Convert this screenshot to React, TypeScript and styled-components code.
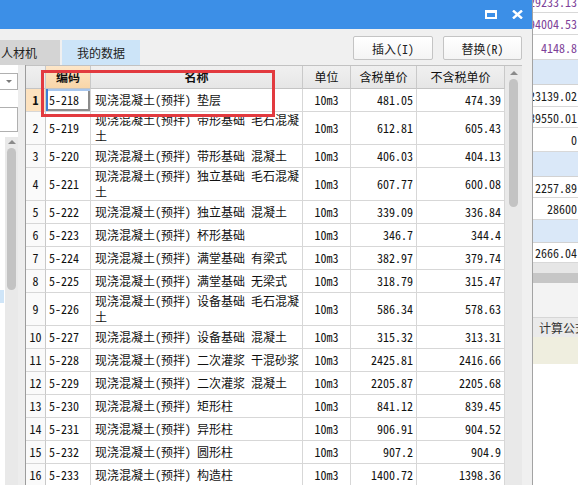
import React from 'react'
import styled, { createGlobalStyle } from 'styled-components'

const FONT = `"Noto Sans Mono CJK SC", "DejaVu Sans Mono", "Noto Sans CJK SC", monospace`

const GlobalStyle = createGlobalStyle`
  html, body {
    margin: 0;
    padding: 0;
    background: #fff;
  }
  body {
    font-family: ${FONT};
    font-size: 12px;
    color: #1a1a1a;
  }
`

const COLS = '20px 45px 212px 48px 66px 88px'

var rows = [
  { code: '5-218', name: ['现浇混凝土(预拌) 垫层'], tax: '481.05', noTax: '474.39' },
  { code: '5-219', name: ['现浇混凝土(预拌) 带形基础 毛石混凝', '土'], tax: '612.81', noTax: '605.43' },
  { code: '5-220', name: ['现浇混凝土(预拌) 带形基础 混凝土'], tax: '406.03', noTax: '404.13' },
  { code: '5-221', name: ['现浇混凝土(预拌) 独立基础 毛石混凝', '土'], tax: '607.77', noTax: '600.08' },
  { code: '5-222', name: ['现浇混凝土(预拌) 独立基础 混凝土'], tax: '339.09', noTax: '336.84' },
  { code: '5-223', name: ['现浇混凝土(预拌) 杯形基础'], tax: '346.7', noTax: '344.4' },
  { code: '5-224', name: ['现浇混凝土(预拌) 满堂基础 有梁式'], tax: '382.97', noTax: '379.74' },
  { code: '5-225', name: ['现浇混凝土(预拌) 满堂基础 无梁式'], tax: '318.79', noTax: '315.47' },
  { code: '5-226', name: ['现浇混凝土(预拌) 设备基础 毛石混凝', '土'], tax: '586.34', noTax: '578.63' },
  { code: '5-227', name: ['现浇混凝土(预拌) 设备基础 混凝土'], tax: '315.32', noTax: '313.31' },
  { code: '5-228', name: ['现浇混凝土(预拌) 二次灌浆 干混砂浆'], tax: '2425.81', noTax: '2416.66' },
  { code: '5-229', name: ['现浇混凝土(预拌) 二次灌浆 混凝土'], tax: '2205.87', noTax: '2205.68' },
  { code: '5-230', name: ['现浇混凝土(预拌) 矩形柱'], tax: '841.12', noTax: '839.45' },
  { code: '5-231', name: ['现浇混凝土(预拌) 异形柱'], tax: '906.91', noTax: '904.52' },
  { code: '5-232', name: ['现浇混凝土(预拌) 圆形柱'], tax: '907.2', noTax: '904.9' },
  { code: '5-233', name: ['现浇混凝土(预拌) 构造柱'], tax: '1400.72', noTax: '1398.36' },
]

// the window behind the dialog, only its right edge shows
var sideRows = [
  { kind: 'row', h: 23, text: '29233.13', purple: true },
  { kind: 'row', h: 22, text: '94004.53', purple: true },
  { kind: 'row', h: 25, text: '4148.8', purple: true },
  { kind: 'band', h: 25 },
  { kind: 'row', h: 22, text: '23139.02' },
  { kind: 'row', h: 21, text: '89550.01' },
  { kind: 'row', h: 24, text: '0' },
  { kind: 'band', h: 25 },
  { kind: 'row', h: 21, text: '2257.89' },
  { kind: 'row', h: 22, text: '28600' },
  { kind: 'band', h: 23 },
  { kind: 'row', h: 20, text: '2666.04' },
]

const Page = styled.div`
  position: relative;
  display: flex;
  width: 578px;
  height: 485px;
  overflow: hidden;
  background: #fff;
`

const Dialog = styled.div`
  flex: none;
  width: 533px;
  box-sizing: border-box;
  display: flex;
  flex-direction: column;
  background: #f0f0f0;
  border-right: 1px solid #a3a3a3;
`

const TitleBar = styled.div`
  flex: none;
  height: 29px;
  background: #3c8fe7;
  display: flex;
  align-items: center;
  justify-content: flex-end;
  gap: 15px;
  padding-right: 9px;
`

const Toolbar = styled.div`
  flex: none;
  height: 36px;
  display: flex;
  padding-right: 10px;
`

const Tabs = styled.div`
  display: flex;
  gap: 2px;
  align-self: flex-end;
  margin-left: -22px;
`

const Tab = styled.div<{ $active?: boolean }>`
  height: 25px;
  display: flex;
  align-items: center;
  padding: 0 ${p => (p.$active ? '15px' : '23px')};
  background: ${p => (p.$active ? '#cce4f8' : '#d4d4d4')};
  color: #222;
  font-size: 12px;
`

const Spacer = styled.div`
  flex: 1;
`

const Buttons = styled.div`
  display: flex;
  gap: 10px;
  margin-top: 7px;
`

const Button = styled.button<{ $w: number }>`
  width: ${p => p.$w}px;
  height: 24px;
  padding: 0;
  border: 1px solid #c4c4c4;
  border-radius: 2px;
  background: linear-gradient(#ffffff, #f4f4f4);
  font-family: ${FONT};
  font-size: 12px;
  color: #222;
`

const Content = styled.div`
  flex: 1;
  min-height: 0;
  display: flex;
  padding-right: 10px;
`

const LeftPanel = styled.div`
  flex: none;
  width: 18px;
  background: #fff;
  display: flex;
  flex-direction: column;
`

const Dropdown = styled.div`
  margin-top: 8px;
  height: 17px;
  box-sizing: border-box;
  border: 1px solid #b0b0b0;
  border-left: none;
  display: flex;
  align-items: center;
  justify-content: flex-end;
  padding-right: 5px;
`

const DownCaret = styled.div`
  width: 0;
  height: 0;
  border-left: 3px solid transparent;
  border-right: 3px solid transparent;
  border-top: 3px solid #7a7a7a;
`

const InputBox = styled.div`
  margin-top: 17px;
  height: 25px;
  box-sizing: border-box;
  border: 1px solid #b0b0b0;
  border-left: none;
`

const ScrollZone = styled.div`
  flex: 1;
  margin-top: 5px;
  display: flex;
`

const ListStrip = styled.div`
  width: 5px;
`

const Picked = styled.div`
  margin-top: 153px;
  width: 4px;
  height: 13px;
  background: #cfe5f8;
`

const Track = styled.div<{ $thumbTop: number; $thumb: number }>`
  flex: 1;
  background: #e9e9e9;
  display: flex;
  flex-direction: column;
  align-items: center;
  padding-top: 3px;

  &::after {
    content: '';
    margin-top: ${p => p.$thumbTop}px;
    width: 9px;
    height: ${p => p.$thumb}px;
    border-radius: 5px;
    background: #c3c3c3;
  }
`

const UpCaret = styled.div`
  width: 0;
  height: 0;
  border-left: 4px solid transparent;
  border-right: 4px solid transparent;
  border-bottom: 4px solid #8a8a8a;
`

const Splitter = styled.div`
  flex: none;
  width: 8px;
  box-sizing: border-box;
  background: #ededed;
  border-right: 1px solid #9c9c9c;
`

const GridArea = styled.div`
  flex: 1;
  display: flex;
  background: #fff;
  border-top: 1px solid #c2c2c2;
`

const Table = styled.div`
  flex: none;
  width: 479px;
`

const GridRow = styled.div<{ $tall?: boolean; $head?: boolean }>`
  display: grid;
  grid-template-columns: ${COLS};
  height: ${p => (p.$head ? 23 : p.$tall ? 33 : 23)}px;
`

const Cell = styled.div<{ $align?: 'left' | 'center' | 'right'; $top?: boolean }>`
  box-sizing: border-box;
  display: flex;
  flex-direction: column;
  justify-content: ${p => (p.$top ? 'flex-start' : 'center')};
  align-items: ${p => (p.$align === 'right' ? 'flex-end' : p.$align === 'center' ? 'center' : 'flex-start')};
  padding: 0 ${p => (p.$align === 'right' ? '3px' : '0')} 0 ${p => (p.$align === 'left' ? '3px' : '0')};
  border-right: 1px solid #d7d7d7;
  border-bottom: 1px solid #d7d7d7;
  overflow: hidden;
  white-space: pre;
  line-height: 16px;
  color: #111;
`

const HeadCell = styled(Cell)<{ $bold?: boolean; $current?: boolean }>`
  background: ${p => (p.$current ? 'linear-gradient(#fde6c8, #f9d6a8)' : 'linear-gradient(#f0f0f0, #e6e6e6)')};
  border-right-color: #c9c9c9;
  border-bottom-color: #c4c4c4;
  font-weight: ${p => (p.$bold ? 700 : 400)};
`

const NumCell = styled(Cell)<{ $current?: boolean }>`
  background: ${p => (p.$current ? '#fde2bf' : '#fafafa')};
  font-weight: ${p => (p.$current ? 700 : 400)};
  border-right-color: #c9c9c9;
`

const CodeCell = styled(Cell)<{ $focus?: boolean }>`
  box-shadow: ${p =>
    p.$focus
      ? 'inset 2px 0 0 #3b7fd6, inset 0 2px 0 #a7c6ee, inset -2px 0 0 #8c8c8c, inset 0 -2px 0 #8c8c8c'
      : 'none'};
`

const NameCell = styled(Cell)`
  padding-left: 4px;
`

const VScroll = styled(Track)`
  padding-top: 5px;
`

const Annotation = styled.div`
  position: absolute;
  left: 41px;
  top: 70px;
  width: 234px;
  height: 47px;
  box-sizing: border-box;
  border: 3px solid #e23a3f;
  pointer-events: none;
`

const Side = styled.div`
  flex: 1;
  min-width: 0;
  overflow: hidden;
  display: flex;
  flex-direction: column;
  margin-top: -10px;
`

const SideRow = styled.div<{ $h: number; $purple?: boolean }>`
  flex: none;
  height: ${p => p.$h}px;
  box-sizing: border-box;
  display: flex;
  align-items: center;
  justify-content: flex-end;
  padding-right: 1px;
  border-bottom: 1px solid #d8d8d8;
  white-space: nowrap;
  color: ${p => (p.$purple ? '#7e3f99' : '#1c1c1c')};
`

const SideBand = styled.div<{ $h: number }>`
  flex: none;
  height: ${p => p.$h}px;
  box-sizing: border-box;
  background: #dae8f8;
  border-bottom: 1px solid #d2d2d2;
`

const SideSplit = styled.div<{ $h: number; $tone: string }>`
  flex: none;
  height: ${p => p.$h}px;
  background: ${p => p.$tone};
`

const FormulaHead = styled.div`
  flex: none;
  height: 19px;
  display: flex;
  align-items: center;
  padding-left: 6px;
  background: #eaeaea;
  border-top: 1px solid #d6d6d6;
  color: #333;
  white-space: nowrap;
`

const SideFill = styled.div`
  flex: 1;
  background: #fff;
`

const MaxIcon = () => (
  <svg width="12" height="9" viewBox="0 0 12 9">
    <rect x="1" y="1.5" width="10" height="6.5" fill="none" stroke="#fff" strokeWidth="2" />
    <rect x="0" y="0" width="12" height="3" fill="#fff" />
  </svg>
)

const CloseIcon = () => (
  <svg width="11" height="9" viewBox="0 0 11 9">
    <path d="M1 0.5 L10 8.5 M10 0.5 L1 8.5" stroke="#fff" strokeWidth="2.4" />
  </svg>
)

export default function App() {
  return (
    <Page>
      <GlobalStyle />
      <Dialog>
        <TitleBar>
          <MaxIcon />
          <CloseIcon />
        </TitleBar>
        <Toolbar>
          <Tabs>
            <Tab>人材机</Tab>
            <Tab $active>我的数据</Tab>
          </Tabs>
          <Spacer />
          <Buttons>
            <Button $w={80}>插入(I)</Button>
            <Button $w={79}>替换(R)</Button>
          </Buttons>
        </Toolbar>
        <Content>
          <LeftPanel>
            <Dropdown>
              <DownCaret />
            </Dropdown>
            <InputBox />
            <ScrollZone>
              <ListStrip>
                <Picked />
              </ListStrip>
              <Track $thumbTop={4} $thumb={142}>
                <UpCaret />
              </Track>
            </ScrollZone>
          </LeftPanel>
          <Splitter />
          <GridArea>
            <Table>
              <GridRow $head>
                <HeadCell $align="center" />
                <HeadCell $align="center" $bold $current>编码</HeadCell>
                <HeadCell $align="center" $bold>名称</HeadCell>
                <HeadCell $align="center">单位</HeadCell>
                <HeadCell $align="center">含税单价</HeadCell>
                <HeadCell $align="center">不含税单价</HeadCell>
              </GridRow>
              {rows.map((r, i) => {
                const tall = r.name.length > 1
                return (
                  <GridRow key={r.code} $tall={tall}>
                    <NumCell $align="center" $current={i === 0}>{i + 1}</NumCell>
                    <CodeCell $align="left" $focus={i === 0}>{r.code}</CodeCell>
                    <NameCell $align="left" $top={tall}>
                      {r.name.map(line => (
                        <span key={line}>{line}</span>
                      ))}
                    </NameCell>
                    <Cell $align="center">10m3</Cell>
                    <Cell $align="right">{r.tax}</Cell>
                    <Cell $align="right">{r.noTax}</Cell>
                  </GridRow>
                )
              })}
            </Table>
            <VScroll $thumbTop={4} $thumb={128}>
              <UpCaret />
            </VScroll>
          </GridArea>
        </Content>
      </Dialog>
      <Side>
        {sideRows.map((s, i) =>
          s.kind === 'band' ? (
            <SideBand key={i} $h={s.h} />
          ) : (
            <SideRow key={i} $h={s.h} $purple={s.purple}>
              {s.text}
            </SideRow>
          )
        )}
        <SideSplit $h={10} $tone="#e6e6e6" />
        <SideSplit $h={10} $tone="#c6c6c6" />
        <SideSplit $h={34} $tone="#f3f3f3" />
        <FormulaHead>计算公式</FormulaHead>
        <SideSplit $h={27} $tone="#efeedf" />
        <SideFill />
      </Side>
      <Annotation />
    </Page>
  )
}
